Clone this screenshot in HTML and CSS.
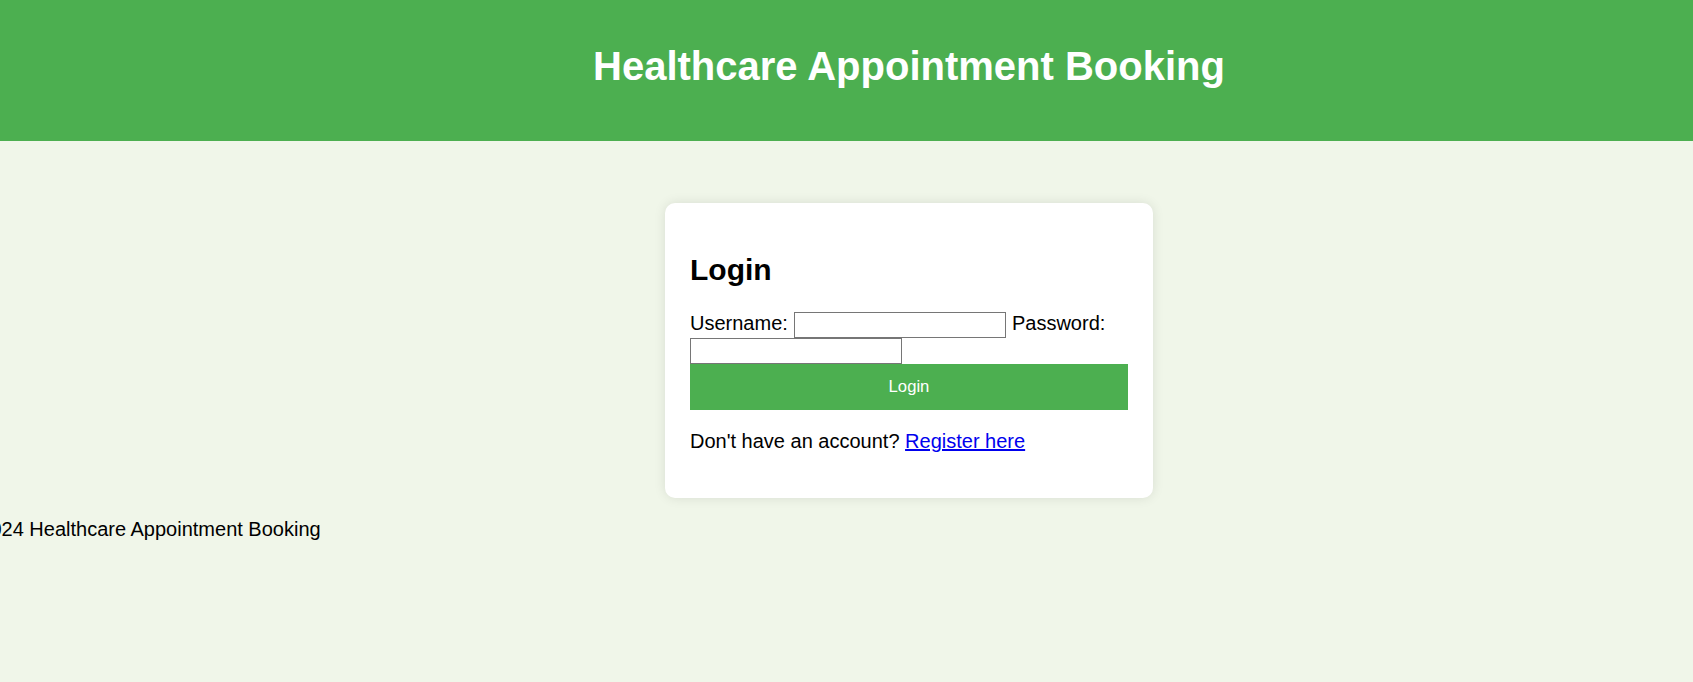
FILE: index.html
```html
<!DOCTYPE html>
<html lang="en">
<head>
<meta charset="utf-8">
<title>Healthcare Appointment Booking</title>
<link rel="stylesheet" href="styles.css">
</head>
<body>
<header class="site-header">
  <h1 class="site-title">Healthcare Appointment Booking</h1>
</header>
<main class="main">
  <section class="card">
    <h2 class="card-title">Login</h2>
    <form class="login-form">
      <label class="field-label" for="username">Username:</label> <input class="text-input" type="text" id="username" name="username"> <label class="field-label" for="password">Password:</label> <input class="text-input" type="password" id="password" name="password">
      <button class="btn-login" type="submit">Login</button>
    </form>
    <p class="register">Don't have an account? <a class="register-link" href="#">Register here</a></p>
  </section>
</main>
<footer class="site-footer">
  <p class="footer-text">&copy; 2024 Healthcare Appointment Booking</p>
</footer>
</body>
</html>
```
FILE: styles.css
```css
html, body {
  margin: 0;
  padding: 0;
}
body {
  background: #f0f6e9;
  font-family: "Liberation Sans", Arial, sans-serif;
  font-size: 20px;
  color: #000;
  overflow-x: hidden;
}
.site-header {
  background: #4caf50;
  color: #fff;
  padding: 44px 0 52px 125px;
  text-align: center;
}
.site-title {
  margin: 0;
  font-size: 40px;
  font-weight: bold;
}
.main {
  padding: 62px 0 0 125px;
}
.card {
  width: 488px;
  box-sizing: border-box;
  margin: 0 auto;
  padding: 25px;
  background: #fff;
  border-radius: 10px;
  box-shadow: 0 0 12px rgba(0, 0, 0, 0.1);
}
.card-title {
  font-size: 30px;
  font-weight: bold;
  margin: 25px 0;
}
.login-form {
  margin: 0;
}
.text-input {
  width: 212px;
  height: 26px;
  box-sizing: border-box;
  border: 1px solid #767676;
  padding: 0 3px;
  margin: 0 0 0 1px;
  font-family: "Liberation Sans", Arial, sans-serif;
  font-size: 16.67px;
  background: #fff;
}
.login-form > .text-input:last-of-type {
  margin-left: 0;
}
.btn-login {
  display: block;
  width: 100%;
  margin: 0;
  padding: 13px 0;
  border: none;
  background: #4caf50;
  color: #fff;
  font-family: "Liberation Sans", Arial, sans-serif;
  font-size: 16.67px;
  cursor: pointer;
}
.register {
  margin: 20px 0;
}
.register-link {
  color: #0000ee;
  text-decoration: underline;
}
.site-footer {
  margin: 0;
}
.footer-text {
  margin: 20px 0 0 -41px;
}
```
